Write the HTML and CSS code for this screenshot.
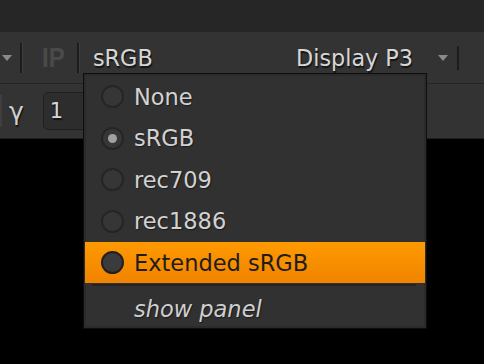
FILE: index.html
```html
<!DOCTYPE html>
<html lang="en">

<head>
    <meta charset="UTF-8" />
    <meta name="viewport" content="width=device-width, initial-scale=1" />
    <title>Viewer colorspace</title>
    <link rel="stylesheet" href="styles.css">
</head>

<body>
    <div class="top-band"></div>

    <div class="toolbar">
        <span class="arrow arrow-left"></span>
        <span class="sep sep-a"></span>
        <span class="ip">IP</span>
        <span class="sep sep-b"></span>
        <span class="label input-space">sRGB</span>
        <span class="label display">Display P3</span>
        <span class="arrow arrow-right"></span>
        <span class="sep sep-c"></span>
    </div>

    <div class="gamma-row">
        <span class="edge"></span>
        <span class="gamma">γ</span>
        <div class="field">1</div>
    </div>

    <div class="black"></div>

    <!-- menu opened from the sRGB button -->
    <div class="menu">
        <div class="item"><span class="radio"></span>None</div>
        <div class="item"><span class="radio checked"></span>sRGB</div>
        <div class="item"><span class="radio"></span>rec709</div>
        <div class="item"><span class="radio"></span>rec1886</div>
        <div class="item active"><span class="radio"></span>Extended sRGB</div>
        <div class="divider"></div>
        <div class="item extra">show panel</div>
    </div>
</body>

</html>
```

FILE: styles.css
```css
* {
    margin: 0;
    padding: 0;
    box-sizing: border-box;
}

body {
    font-family: 'DejaVu Sans', 'Liberation Sans', sans-serif;
    background: #000000;
    width: 484px;
    height: 364px;
    overflow: hidden;
    position: relative;
}

.top-band {
    height: 32px;
    background: #262626;
}

/* Barra do viewer */
.toolbar {
    height: 52px;
    background: #333333;
    border-bottom: 1px solid #242424;
    display: flex;
    align-items: center;
}

.arrow {
    width: 0;
    height: 0;
    border-left: 5px solid transparent;
    border-right: 5px solid transparent;
    border-top: 6px solid #8a8a8a;
}

.arrow-left {
    margin-left: 2px;
}

.sep {
    width: 3px;
    height: 30px;
    background: #1c1c1c;
    border-right: 1px solid #3e3e3e;
}

.sep-a {
    margin-left: 8px;
}

.ip {
    margin-left: 19px;
    font-family: 'Liberation Sans', sans-serif;
    font-weight: bold;
    font-size: 28px;
    color: #4a4a4a;
    display: inline-block;
    transform: scaleX(0.86);
    transform-origin: left center;
    width: 23px;
}

.sep-b {
    margin-left: 12px;
}

.label {
    font-size: 22.3px;
    color: #d6d6d6;
    text-shadow: 1px 2px 1px #141414;
}

.input-space {
    margin-left: 13px;
}

.display {
    margin-left: auto;
}

.arrow-right {
    margin-left: 25px;
}

.sep-c {
    margin-left: 9px;
    margin-right: 25px;
    width: 2px;
    height: 24px;
    border-right: none;
    background: #1c1c1c;
}

/* Linha do gamma */
.gamma-row {
    height: 55px;
    background: #333333;
    border-bottom: 1px solid #1e1e1e;
    display: flex;
    align-items: center;
}

.edge {
    width: 2px;
    height: 32px;
    background: #3f3f3f;
}

.gamma {
    margin-left: 7px;
    font-size: 25px;
    color: #cfcfcf;
    text-shadow: 1px 2px 1px #141414;
}

.field {
    margin-left: 19px;
    width: 120px;
    height: 38px;
    background: #2d2d2d;
    border: 1px solid #1f1f1f;
    border-radius: 5px;
    font-size: 21px;
    color: #d6d6d6;
    padding-left: 6px;
    line-height: 36px;
    text-shadow: 1px 2px 1px #141414;
}

/* Menu suspenso */
.menu {
    position: absolute;
    left: 83px;
    top: 73px;
    width: 344px;
    height: 256px;
    background: #313131;
    border: 1px solid #0e0e0e;
    box-shadow: inset 0 0 0 2px #2b2b2b;
    padding-top: 2px;
}

.item {
    height: 41.5px;
    display: flex;
    align-items: center;
    padding-left: 17px;
    font-size: 22.5px;
    color: #d2d2d2;
    text-shadow: 1px 1px 1px #1c1c1c;
}

.radio {
    width: 23px;
    height: 23px;
    border-radius: 50%;
    background: #363636;
    border: 2px solid #252525;
    margin-right: 10px;
    display: flex;
    align-items: center;
    justify-content: center;
}

.radio.checked::after {
    content: '';
    width: 9px;
    height: 9px;
    border-radius: 50%;
    background: #a0a0a0;
}

.item.active {
    height: 41px;
    margin-left: 1px;
    margin-right: 1px;
    padding-left: 16px;
    background: linear-gradient(to bottom, #ff9a00, #f08300);
    color: #1d1d1d;
    text-shadow: none;
}

.item.active .radio {
    background: #3b3b3b;
    border-color: #202020;
}

.divider {
    height: 2px;
    margin: 1px 10px 0 8px;
    background: #232323;
}

.item.extra {
    height: 46px;
    padding-left: 50px;
    font-style: italic;
    color: #cfcfcf;
}
```
